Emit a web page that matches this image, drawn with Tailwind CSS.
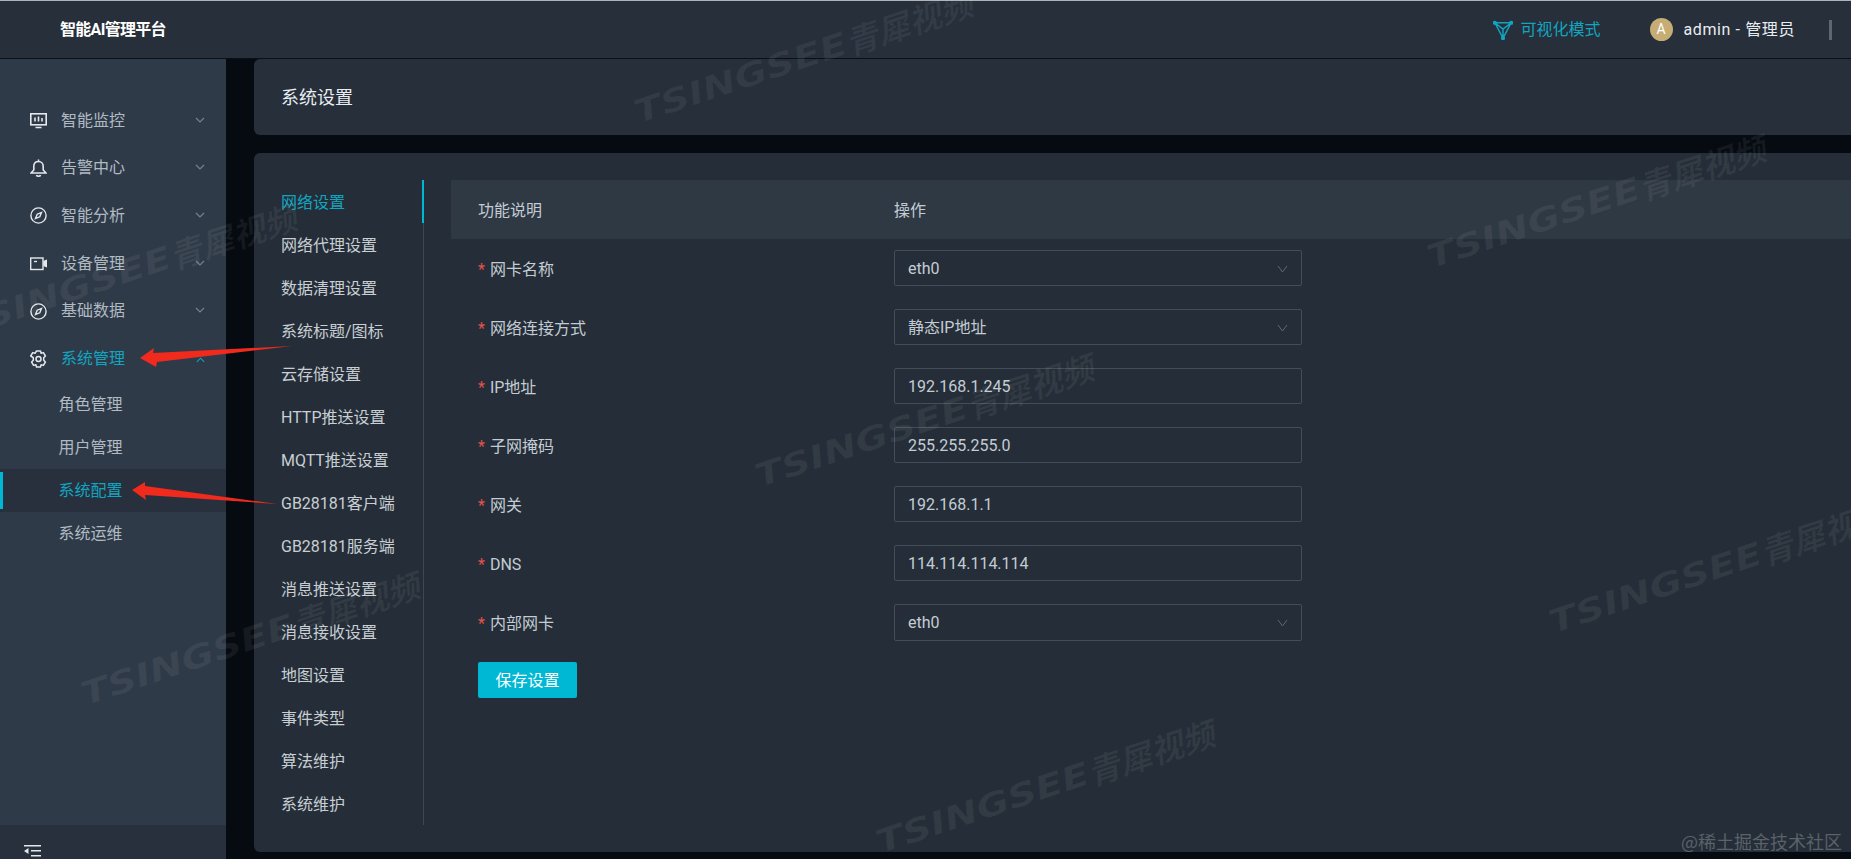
<!DOCTYPE html>
<html lang="zh-CN">
<head>
    <meta charset="UTF-8">
    <title>智能AI管理平台</title>
    <script src="https://cdn.jsdelivr.net/npm/@tailwindcss/browser@4"></script>
</head>
<body class="relative w-[1851px] h-[859px] overflow-hidden bg-[#060b12] text-[16px] text-[#c3ccd4] font-['Roboto','Noto_Sans_CJK_SC',sans-serif]">
    <div class="h-px bg-[#aeb4ba]"></div>

    <!-- top bar -->
    <header class="h-[58px] flex items-center bg-[#262f3a] border-b border-[#0b1017]">
        <div class="ml-[60px] font-bold text-white tracking-[-0.7px]">智能AI管理平台</div>
        <div class="ml-auto flex items-center text-[#12a5c0]">
            <svg class="w-[20px] h-[20px]" viewBox="0 0 22 22" fill="none" stroke="currentColor" stroke-width="1.6" stroke-linejoin="round">
                <path d="M2 3 L20 3 L11 20 Z M2 3 L11 10 L20 3 M11 10 L11 20"/>
                <circle cx="2" cy="3" r="1.5" fill="currentColor"/>
                <circle cx="20" cy="3" r="1.5" fill="currentColor"/>
                <circle cx="11" cy="20" r="1.5" fill="currentColor"/>
            </svg>
            <span class="ml-[8px]">可视化模式</span>
        </div>
        <div class="ml-[49px] w-[23px] h-[23px] rounded-full bg-[#c6ad74] text-white text-[14px] flex items-center justify-center">A</div>
        <div class="ml-[11px] text-[#e8edf1] tracking-[0.6px]">admin - 管理员</div>
        <div class="ml-[34px] mr-[19px] w-[3px] h-[20px] bg-[#5f666d]"></div>
    </header>

    <div class="flex h-[800px]">
        <!-- sidebar -->
        <aside class="w-[226px] shrink-0 flex flex-col bg-[#2f3a48] text-[#b0bac3]">
            <nav class="flex-1 pt-[38px]">
                <div class="h-[47.6px] flex items-center pl-[30px] pr-[21px]">
                    <svg class="w-[17px] h-[17px] text-[#e4e8ec]" viewBox="0 0 17 17" fill="none" stroke="currentColor" stroke-width="1.6">
                        <rect x="0.8" y="1.800" width="15.4" height="11" />
                        <path d="M5 5.500v4M8.500 4.500v5M12 6v3.500M5.500 15.500h6"/>
                    </svg>
                    <span class="ml-[14px]">智能监控</span>
                    <svg class="ml-auto -mt-[2px] w-[10px] h-[6px] text-[#76818e]" viewBox="0 0 10 6" fill="none" stroke="currentColor" stroke-width="1.200"><path d="M1 1l4 4 4-4"/></svg>
                </div>
                <div class="h-[47.6px] flex items-center pl-[30px] pr-[21px]">
                    <svg class="w-[17px] h-[19px] text-[#e4e8ec]" viewBox="0 0 17 19" fill="none" stroke="currentColor" stroke-width="1.600">
                        <path d="M8.500 2.500c-3 0-4.700 2.200-4.700 5v3.500L1 14h15l-2.800-3V7.500c0-2.800-1.700-5-4.700-5zM8.500 0.500v2M6.500 16c.3 1.600 3.700 1.600 4 0"/>
                    </svg>
                    <span class="ml-[14px]">告警中心</span>
                    <svg class="ml-auto -mt-[2px] w-[10px] h-[6px] text-[#76818e]" viewBox="0 0 10 6" fill="none" stroke="currentColor" stroke-width="1.200"><path d="M1 1l4 4 4-4"/></svg>
                </div>
                <div class="h-[47.6px] flex items-center pl-[30px] pr-[21px]">
                    <svg class="w-[17px] h-[17px] text-[#e4e8ec]" viewBox="0 0 17 17" fill="none" stroke="currentColor" stroke-width="1.400">
                        <circle cx="8.500" cy="8.500" r="7.600"/>
                        <path d="M11.500 5.500L9.800 9.800 5.500 11.500 7.200 7.200z"/>
                    </svg>
                    <span class="ml-[14px]">智能分析</span>
                    <svg class="ml-auto -mt-[2px] w-[10px] h-[6px] text-[#76818e]" viewBox="0 0 10 6" fill="none" stroke="currentColor" stroke-width="1.200"><path d="M1 1l4 4 4-4"/></svg>
                </div>
                <div class="h-[47.6px] flex items-center pl-[30px] pr-[21px]">
                    <svg class="w-[17px] h-[14px] text-[#e4e8ec]" viewBox="0 0 17 14" fill="none" stroke="currentColor" stroke-width="1.400">
                        <rect x="0.700" y="1" width="12.300" height="11.500"/>
                        <path d="M4 4.500h3"/>
                        <path d="M14 4.500l2.300-1v6l-2.300-1z" fill="currentColor"/>
                    </svg>
                    <span class="ml-[14px]">设备管理</span>
                    <svg class="ml-auto -mt-[2px] w-[10px] h-[6px] text-[#76818e]" viewBox="0 0 10 6" fill="none" stroke="currentColor" stroke-width="1.200"><path d="M1 1l4 4 4-4"/></svg>
                </div>
                <div class="h-[47.6px] flex items-center pl-[30px] pr-[21px]">
                    <svg class="w-[17px] h-[17px] text-[#e4e8ec]" viewBox="0 0 17 17" fill="none" stroke="currentColor" stroke-width="1.400">
                        <circle cx="8.500" cy="8.500" r="7.600"/>
                        <path d="M11.500 5.500L9.800 9.800 5.500 11.500 7.200 7.200z"/>
                    </svg>
                    <span class="ml-[14px]">基础数据</span>
                    <svg class="ml-auto -mt-[2px] w-[10px] h-[6px] text-[#76818e]" viewBox="0 0 10 6" fill="none" stroke="currentColor" stroke-width="1.200"><path d="M1 1l4 4 4-4"/></svg>
                </div>
                <div class="h-[47.6px] flex items-center pl-[30px] pr-[21px] text-[#12a5c0]">
                    <svg class="w-[17px] h-[18px] text-[#e4e8ec]" viewBox="0 0 17 18" fill="none" stroke="currentColor" stroke-width="1.500" stroke-linejoin="round">
                        <path d="M6.500 1h4l.6 2.300 2.300-.7 2 3.400-1.700 1.700 0 2.600 1.700 1.700-2 3.400-2.300-.7-.6 2.300h-4l-.6-2.300-2.300.7-2-3.400 1.700-1.700 0-2.600L.7 6l2-3.400 2.300.7z"/>
                        <circle cx="8.500" cy="9" r="2.500"/>
                    </svg>
                    <span class="ml-[14px]">系统管理</span>
                </div>
                <div class="h-[43px] flex items-center pl-[58.5px] pt-[2px]">角色管理</div>
                <div class="h-[43px] flex items-center pl-[58.5px] pt-[2px]">用户管理</div>
                <div class="relative h-[43px] flex items-center pl-[58.5px] pt-[2px] bg-[#27303c] text-[#12a5c0]">
                    <span class="absolute left-0 top-[3px] bottom-[3px] w-[3px] bg-[#00b8d4]"></span>
                    系统配置
                </div>
                <div class="h-[43px] flex items-center pl-[58.5px] pt-[2px]">系统运维</div>
            </nav>
            <div class="h-[34px] pl-[24px] pt-[20px] bg-[#27303c]">
                <svg class="w-[17px] h-[12px] text-[#e4e8ec]" viewBox="0 0 17 12" fill="currentColor">
                    <path d="M0 0h17v1.500H0zM7 5h10v1.500H7zM7 10h10v1.500H7zM4.500 3v6L0 6z"/>
                </svg>
            </div>
        </aside>

        <!-- main -->
        <main class="flex-1 pl-[28px] flex flex-col">
            <div class="h-[76px] flex items-center pl-[27px] bg-[#262f3a] rounded-l-[6px] text-[18px] text-[#e8edf1]">系统设置</div>
            <div class="mt-[18px] h-[699px] flex bg-[#252e38] rounded-l-[6px] pt-[27px]">
                <!-- settings tabs -->
                <ul class="w-[170px] h-[645px] shrink-0 pl-[27px] border-r border-[#3e4853] text-[#c8ced4]">
                    <li class="relative h-[43px] flex items-center pt-[2px] text-[#12a5c0]">
                        网络设置
                        <span class="absolute right-[-1px] top-0 bottom-0 w-[2px] bg-[#00b8d4]"></span>
                    </li>
                    <li class="h-[43px] flex items-center pt-[2px]">网络代理设置</li>
                    <li class="h-[43px] flex items-center pt-[2px]">数据清理设置</li>
                    <li class="h-[43px] flex items-center pt-[2px]">系统标题/图标</li>
                    <li class="h-[43px] flex items-center pt-[2px]">云存储设置</li>
                    <li class="h-[43px] flex items-center pt-[2px]">HTTP推送设置</li>
                    <li class="h-[43px] flex items-center pt-[2px]">MQTT推送设置</li>
                    <li class="h-[43px] flex items-center pt-[2px]">GB28181客户端</li>
                    <li class="h-[43px] flex items-center pt-[2px]">GB28181服务端</li>
                    <li class="h-[43px] flex items-center pt-[2px]">消息推送设置</li>
                    <li class="h-[43px] flex items-center pt-[2px]">消息接收设置</li>
                    <li class="h-[43px] flex items-center pt-[2px]">地图设置</li>
                    <li class="h-[43px] flex items-center pt-[2px]">事件类型</li>
                    <li class="h-[43px] flex items-center pt-[2px]">算法维护</li>
                    <li class="h-[43px] flex items-center pt-[2px]">系统维护</li>
                </ul>

                <!-- network form -->
                <div class="flex-1 ml-[27px]">
                    <div class="h-[59px] flex items-center pl-[27px] pt-[2px] bg-[#2f3944]">
                        <div class="w-[416px]">功能说明</div>
                        <div>操作</div>
                    </div>
                    <div class="h-[59px] flex items-center pl-[27px] pb-[1px]">
                        <div class="w-[416px] pt-[3px]"><span class="text-[#e2534d] mr-[5px]">*</span>网卡名称</div>
                        <div class="w-[408px] h-[36px] flex items-center justify-between pl-[13px] pr-[13px] pt-[2px] border border-[#444e59] rounded-[2px]">eth0
                            <svg class="w-[11px] h-[8px] text-[#5e6874]" viewBox="0 0 11 8" fill="none" stroke="currentColor" stroke-width="1"><path d="M1 1l4.500 6 4.500-6"/></svg>
                        </div>
                    </div>
                    <div class="h-[59px] flex items-center pl-[27px] pb-[1px]">
                        <div class="w-[416px] pt-[3px]"><span class="text-[#e2534d] mr-[5px]">*</span>网络连接方式</div>
                        <div class="w-[408px] h-[36px] flex items-center justify-between pl-[13px] pr-[13px] pt-[2px] border border-[#444e59] rounded-[2px]">静态IP地址
                            <svg class="w-[11px] h-[8px] text-[#5e6874]" viewBox="0 0 11 8" fill="none" stroke="currentColor" stroke-width="1"><path d="M1 1l4.500 6 4.500-6"/></svg>
                        </div>
                    </div>
                    <div class="h-[59px] flex items-center pl-[27px] pb-[1px]">
                        <div class="w-[416px] pt-[3px]"><span class="text-[#e2534d] mr-[5px]">*</span>IP地址</div>
                        <div class="w-[408px] h-[36px] flex items-center pl-[13px] pt-[2px] border border-[#444e59] rounded-[2px]">192.168.1.245</div>
                    </div>
                    <div class="h-[59px] flex items-center pl-[27px] pb-[1px]">
                        <div class="w-[416px] pt-[3px]"><span class="text-[#e2534d] mr-[5px]">*</span>子网掩码</div>
                        <div class="w-[408px] h-[36px] flex items-center pl-[13px] pt-[2px] border border-[#444e59] rounded-[2px]">255.255.255.0</div>
                    </div>
                    <div class="h-[59px] flex items-center pl-[27px] pb-[1px]">
                        <div class="w-[416px] pt-[3px]"><span class="text-[#e2534d] mr-[5px]">*</span>网关</div>
                        <div class="w-[408px] h-[36px] flex items-center pl-[13px] pt-[2px] border border-[#444e59] rounded-[2px]">192.168.1.1</div>
                    </div>
                    <div class="h-[59px] flex items-center pl-[27px] pb-[1px]">
                        <div class="w-[416px] pt-[3px]"><span class="text-[#e2534d] mr-[5px]">*</span>DNS</div>
                        <div class="w-[408px] h-[36px] flex items-center pl-[13px] pt-[2px] border border-[#444e59] rounded-[2px]">114.114.114.114</div>
                    </div>
                    <div class="h-[59px] flex items-center pl-[27px] pb-[1px]">
                        <div class="w-[416px] pt-[3px]"><span class="text-[#e2534d] mr-[5px]">*</span>内部网卡</div>
                        <div class="w-[408px] h-[37px] flex items-center justify-between pl-[13px] pr-[13px] pt-[2px] border border-[#444e59] rounded-[2px]">eth0
                            <svg class="w-[11px] h-[8px] text-[#5e6874]" viewBox="0 0 11 8" fill="none" stroke="currentColor" stroke-width="1"><path d="M1 1l4.500 6 4.500-6"/></svg>
                        </div>
                    </div>
                    <button class="ml-[27px] mt-[10px] w-[99px] h-[36px] pt-[1px] bg-[#00b8d4] text-white rounded-[2px]">保存设置</button>
                </div>
            </div>
        </main>
    </div>

    <!-- watermarks over the page: latin part stretched wide, as the logo type is -->
    <div class="absolute left-[630px] top-[98px] flex origin-top-left -rotate-[18.5deg] leading-none font-bold italic whitespace-nowrap text-white/[0.06]"><span class="w-[222px] font-['DejaVu_Sans'] text-[32px]"><span class="inline-block origin-left scale-x-[1.26]">TSINGSEE</span></span><span class="font-['Noto_Sans_CJK_SC'] text-[33px]">青犀视频</span></div>
    <div class="absolute left-[1423px] top-[243px] flex origin-top-left -rotate-[18.5deg] leading-none font-bold italic whitespace-nowrap text-white/[0.06]"><span class="w-[222px] font-['DejaVu_Sans'] text-[32px]"><span class="inline-block origin-left scale-x-[1.26]">TSINGSEE</span></span><span class="font-['Noto_Sans_CJK_SC'] text-[33px]">青犀视频</span></div>
    <div class="absolute left-[-46px] top-[312px] flex origin-top-left -rotate-[18.5deg] leading-none font-bold italic whitespace-nowrap text-white/[0.06]"><span class="w-[222px] font-['DejaVu_Sans'] text-[32px]"><span class="inline-block origin-left scale-x-[1.26]">TSINGSEE</span></span><span class="font-['Noto_Sans_CJK_SC'] text-[33px]">青犀视频</span></div>
    <div class="absolute left-[751px] top-[462px] flex origin-top-left -rotate-[18.5deg] leading-none font-bold italic whitespace-nowrap text-white/[0.06]"><span class="w-[222px] font-['DejaVu_Sans'] text-[32px]"><span class="inline-block origin-left scale-x-[1.26]">TSINGSEE</span></span><span class="font-['Noto_Sans_CJK_SC'] text-[33px]">青犀视频</span></div>
    <div class="absolute left-[77px] top-[680px] flex origin-top-left -rotate-[18.5deg] leading-none font-bold italic whitespace-nowrap text-white/[0.06]"><span class="w-[222px] font-['DejaVu_Sans'] text-[32px]"><span class="inline-block origin-left scale-x-[1.26]">TSINGSEE</span></span><span class="font-['Noto_Sans_CJK_SC'] text-[33px]">青犀视频</span></div>
    <div class="absolute left-[872px] top-[828px] flex origin-top-left -rotate-[18.5deg] leading-none font-bold italic whitespace-nowrap text-white/[0.06]"><span class="w-[222px] font-['DejaVu_Sans'] text-[32px]"><span class="inline-block origin-left scale-x-[1.26]">TSINGSEE</span></span><span class="font-['Noto_Sans_CJK_SC'] text-[33px]">青犀视频</span></div>
    <div class="absolute left-[1545px] top-[608px] flex origin-top-left -rotate-[18.5deg] leading-none font-bold italic whitespace-nowrap text-white/[0.06]"><span class="w-[222px] font-['DejaVu_Sans'] text-[32px]"><span class="inline-block origin-left scale-x-[1.26]">TSINGSEE</span></span><span class="font-['Noto_Sans_CJK_SC'] text-[33px]">青犀视频</span></div>

    <!-- annotation arrows, with the open-menu chevron showing over the first one -->
    <svg class="absolute left-0 top-0 w-[1851px] h-[859px] pointer-events-none" viewBox="0 0 1851 859">
        <path d="M140 358 L154 348 L153 353 L292 346 L157 362 L156 367 Z" fill="#f02a1c"/>
        <path d="M132 490 L145 482 L145 486 L277 504 L145 495 L146 500 Z" fill="#f02a1c"/>
    </svg>
    <svg class="absolute left-[196px] top-[357px] w-[9px] h-[6px] text-[#12a5c0]" viewBox="0 0 10 6" fill="none" stroke="currentColor" stroke-width="1.200"><path d="M1 5l4-4 4 4"/></svg>

    <div class="absolute right-[9px] bottom-[9px] text-[18px] leading-none text-white/25 font-['Noto_Sans_CJK_SC',sans-serif]">@稀土掘金技术社区</div>
</body>
</html>
